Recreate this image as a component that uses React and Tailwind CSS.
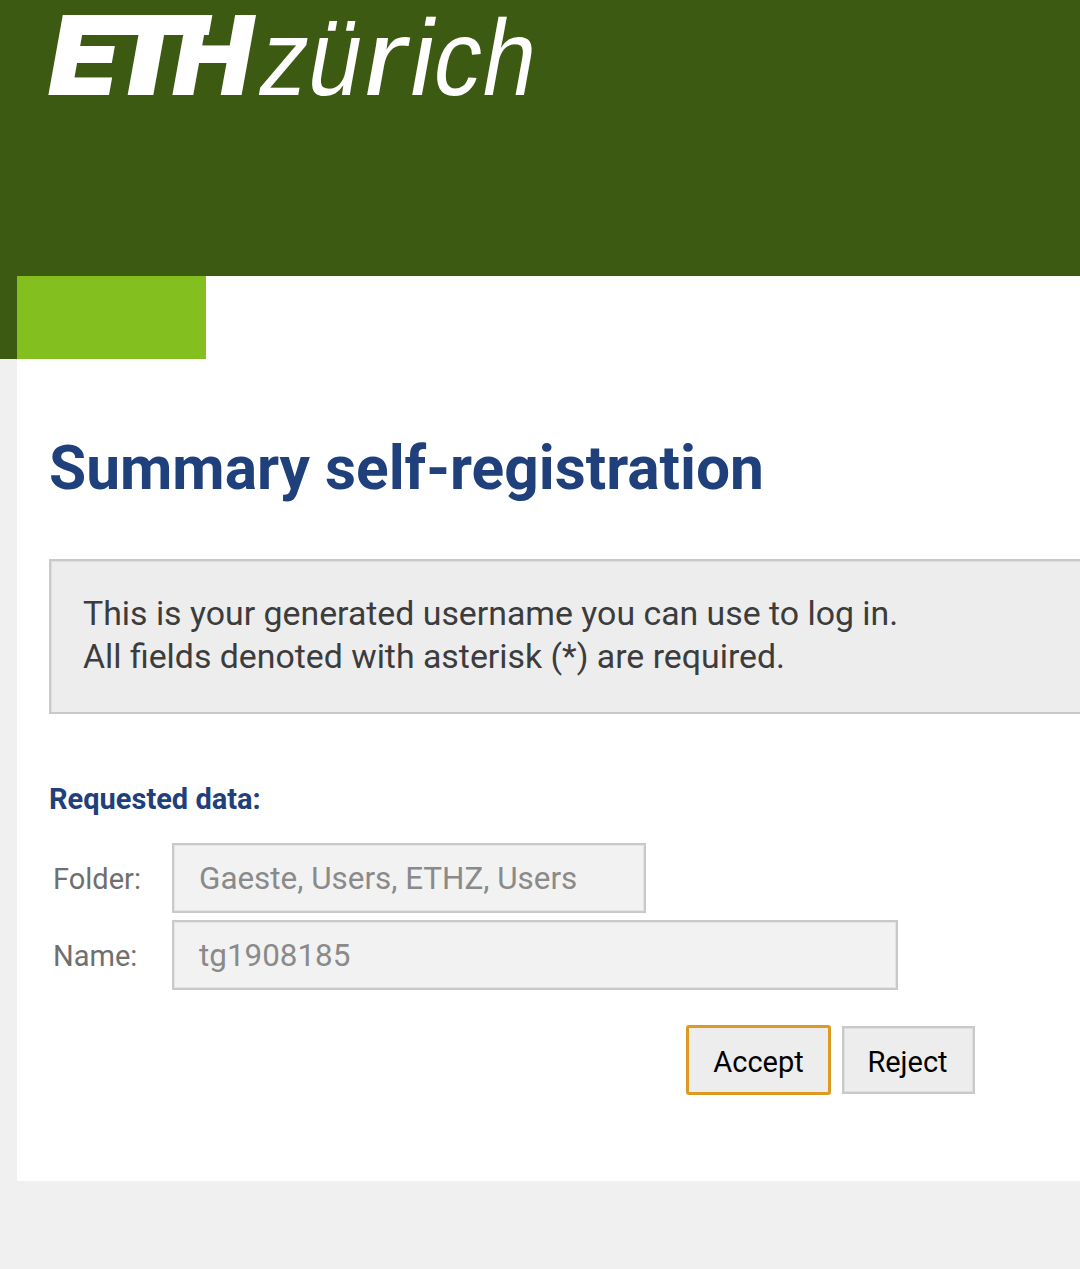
import React from "react";

const fields = [
  { label: "Folder:", value: "Gaeste, Users, ETHZ, Users", width: "w-[474px]" },
  { label: "Name:", value: "tg1908185", width: "w-[726px]" },
];

const capitals = [
  { char: "E", x: -5, width: 71 },
  { char: "T", x: 48, width: 89 },
  { char: "H", x: 119.5, width: 79 },
];

const smallLetters = [
  { char: "z", x: 207, width: 48 },
  { char: "ü", x: 255, width: 53 },
  { char: "r", x: 310, width: 44 },
  { char: "i", x: 357, width: 24.2 },
  { char: "c", x: 381, width: 47 },
  { char: "h", x: 430, width: 52 },
];

const Letter = ({ char, x, width }) => (
  <text x={x} y="0" textLength={width} lengthAdjust="spacingAndGlyphs">
    {char}
  </text>
);

const Logo = () => (
  <svg
    viewBox="0 0 486 80"
    className="block w-[486px] h-20 overflow-visible"
    fill="#fff"
    role="img"
    aria-label="ETH zürich"
  >
    {/* Slanted around the baseline */}
    <g transform="translate(0 80) skewX(-10.2)">
      <g fontFamily="Inter, sans-serif" fontWeight="900" fontSize="110">
        {capitals.map((letter) => (
          <Letter key={letter.char} {...letter} />
        ))}
      </g>
      {/* Bar that joins the three capitals */}
      <rect x="1" y="-80" width="149" height="20" />
      <g fontFamily="'Liberation Sans', sans-serif" fontSize="108">
        {smallLetters.map((letter) => (
          <Letter key={letter.char} {...letter} />
        ))}
      </g>
    </g>
  </svg>
);

const Header = () => (
  <header className="bg-[#3c5a11]">
    <div className="h-[276px] pl-12 pt-[15px]">
      <Logo />
    </div>
    <div className="flex h-[83px] pl-[17px]">
      <div className="w-[189px] bg-[#83bf1f]" />
      <div className="flex-1 bg-white" />
    </div>
  </header>
);

const Field = ({ label, value, width }) => (
  <div className="flex items-center">
    <label className="w-[119px] shrink-0 pt-[3px] text-[29px] text-[#6f6f6f]">{label}</label>
    <div
      className={`${width} h-[70px] flex items-center border-2 border-[#c9c9c9] bg-[#f2f2f2] pl-[25px] pt-[2px] text-[31.4px] text-[#8a8a8a] shadow-[inset_0_0_0_1px_#e4e4e4]`}
    >
      {value}
    </div>
  </div>
);

export default function App() {
  return (
    <div className="min-h-[1269px] overflow-hidden bg-[#f0f0f0] font-['Roboto',sans-serif]">
      <Header />

      <main className="ml-[17px] h-[822px] bg-white pl-8 pt-[74px]">
        <h1 className="text-[60.4px] leading-[72px] font-bold text-[#1f407a]">
          Summary self-registration
        </h1>

        {/* Info box */}
        <div className="mt-[54px] h-[155px] border-2 border-r-0 border-[#c9c9c9] bg-[#ededed] pl-8 pt-[31px] text-[33.85px] leading-[43px] text-[#3c3c3c] shadow-[inset_1px_1px_0_#dedede]">
          <p>This is your generated username you can use to log in.</p>
          <p>All fields denoted with asterisk (*) are required.</p>
        </div>

        <h2 className="mt-[67px] text-[29px] leading-[36px] font-bold text-[#1f407a]">
          Requested data:
        </h2>

        <div className="mt-[26px] ml-1 flex flex-col gap-[7px]">
          {fields.map((field) => (
            <Field key={field.label} {...field} />
          ))}
        </div>

        {/* Actions */}
        <div className="mt-[35px] ml-[637px] flex items-center gap-[11px] text-[29px] text-black">
          <button className="w-[145px] h-[70px] rounded-[3px] border-[3px] border-[#dc9a20] bg-[#ededed] pt-[5px]">
            Accept
          </button>
          <button className="w-[133px] h-[68px] border-2 border-[#c9c9c9] bg-[#ededed] pt-[5px] pr-[2px] shadow-[inset_0_0_0_1px_#dedede]">
            Reject
          </button>
        </div>
      </main>
    </div>
  );
}
